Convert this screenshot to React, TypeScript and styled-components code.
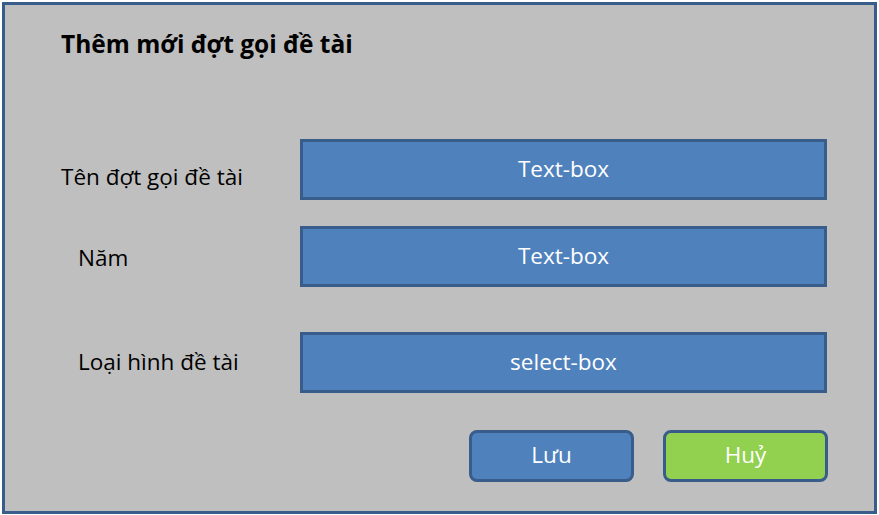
import React from 'react';
import styled, { createGlobalStyle } from 'styled-components';

const GlobalStyle = createGlobalStyle`
  body {
    margin: 0;
    background: #ffffff;
    font-family: 'Open Sans', 'Noto Sans', sans-serif;
  }
`;

const Frame = styled.div`
  box-sizing: border-box;
  width: 875px;
  height: 512px;
  margin: 2px 0 0 2px;
  border: 3px solid #385d8a;
  background: #bfbfbf;
  padding: 0 0 0 56px;
  display: flex;
  flex-direction: column;
`;

const Title = styled.h1`
  margin: 0;
  height: 134px;
  padding-top: 24px;
  box-sizing: border-box;
  font-size: 24.5px;
  line-height: 30px;
  font-weight: 700;
  color: #000;
`;

const Row = styled.div<{ $gap: number }>`
  display: grid;
  grid-template-columns: 239px 527px;
  align-items: center;
  margin-bottom: ${(p) => p.$gap}px;
`;

const Label = styled.span<{ $indent?: number; $shift?: number }>`
  padding-left: ${(p) => p.$indent ?? 0}px;
  margin-top: ${(p) => p.$shift ?? 0}px;
  font-size: 22.5px;
  line-height: 28px;
  color: #000;
`;

const Box = styled.div`
  box-sizing: border-box;
  height: 61px;
  border: 3px solid #385d8a;
  background: #4f81bd;
  color: #fff;
  font-size: 22.5px;
  display: flex;
  align-items: center;
  justify-content: center;
  padding-bottom: 3px;
`;

const Actions = styled.div`
  display: flex;
  gap: 29px;
  padding-left: 408px;
`;

const Button = styled.button<{ $green?: boolean }>`
  box-sizing: border-box;
  width: 165px;
  height: 52px;
  border: 3px solid #385d8a;
  border-radius: 8px;
  background: ${(p) => (p.$green ? '#92d050' : '#4f81bd')};
  color: #fff;
  font-family: inherit;
  font-size: 22.5px;
  padding: 0 0 4px;
`;

export default function App() {
  return (
    <>
      <GlobalStyle />
      <Frame>
        <Title>Thêm mới đợt gọi đề tài</Title>
        <Row $gap={26}>
          <Label $shift={14}>Tên đợt gọi đề tài</Label>
          <Box>Text-box</Box>
        </Row>
        <Row $gap={45}>
          <Label $indent={17} $shift={2}>Năm</Label>
          <Box>Text-box</Box>
        </Row>
        <Row $gap={37}>
          <Label $indent={17} $shift={-2}>Loại hình đề tài</Label>
          <Box>select-box</Box>
        </Row>
        <Actions>
          <Button>Lưu</Button>
          <Button $green>Huỷ</Button>
        </Actions>
      </Frame>
    </>
  );
}
